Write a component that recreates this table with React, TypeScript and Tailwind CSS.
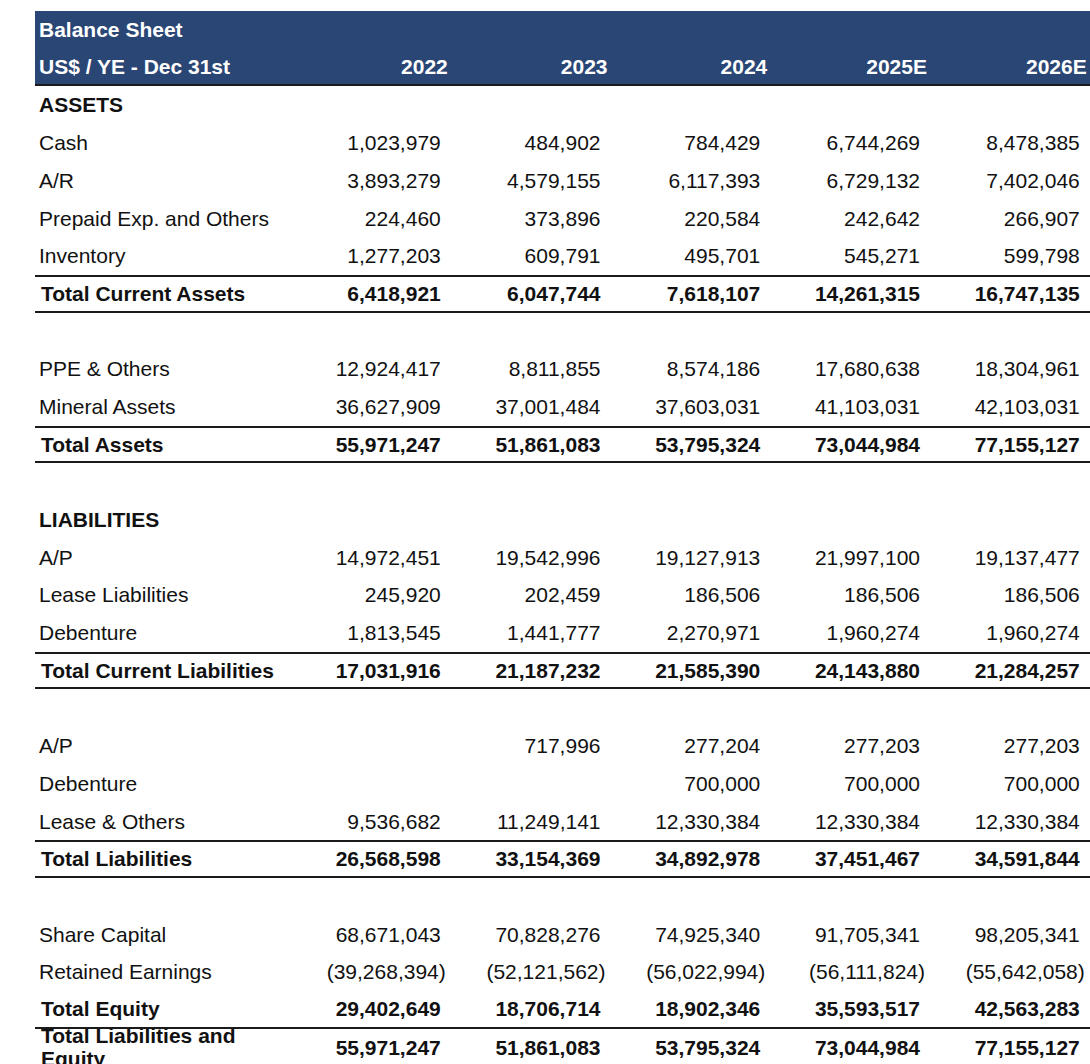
type Row = {
  label: string;
  values?: string[];
  kind?: "item" | "total" | "section" | "blank" | "final" | "equity";
};

const rows: Row[] = [
  { label: "ASSETS", kind: "section" },
  { label: "Cash", values: ["1,023,979", "484,902", "784,429", "6,744,269", "8,478,385"] },
  { label: "A/R", values: ["3,893,279", "4,579,155", "6,117,393", "6,729,132", "7,402,046"] },
  { label: "Prepaid Exp. and Others", values: ["224,460", "373,896", "220,584", "242,642", "266,907"] },
  { label: "Inventory", values: ["1,277,203", "609,791", "495,701", "545,271", "599,798"] },
  { label: "Total Current Assets", kind: "total", values: ["6,418,921", "6,047,744", "7,618,107", "14,261,315", "16,747,135"] },
  { label: "", kind: "blank" },
  { label: "PPE & Others", values: ["12,924,417", "8,811,855", "8,574,186", "17,680,638", "18,304,961"] },
  { label: "Mineral Assets", values: ["36,627,909", "37,001,484", "37,603,031", "41,103,031", "42,103,031"] },
  { label: "Total Assets", kind: "total", values: ["55,971,247", "51,861,083", "53,795,324", "73,044,984", "77,155,127"] },
  { label: "", kind: "blank" },
  { label: "LIABILITIES", kind: "section" },
  { label: "A/P", values: ["14,972,451", "19,542,996", "19,127,913", "21,997,100", "19,137,477"] },
  { label: "Lease Liabilities", values: ["245,920", "202,459", "186,506", "186,506", "186,506"] },
  { label: "Debenture", values: ["1,813,545", "1,441,777", "2,270,971", "1,960,274", "1,960,274"] },
  { label: "Total Current Liabilities", kind: "total", values: ["17,031,916", "21,187,232", "21,585,390", "24,143,880", "21,284,257"] },
  { label: "", kind: "blank" },
  { label: "A/P", values: ["", "717,996", "277,204", "277,203", "277,203"] },
  { label: "Debenture", values: ["", "", "700,000", "700,000", "700,000"] },
  { label: "Lease & Others", values: ["9,536,682", "11,249,141", "12,330,384", "12,330,384", "12,330,384"] },
  { label: "Total Liabilities", kind: "total", values: ["26,568,598", "33,154,369", "34,892,978", "37,451,467", "34,591,844"] },
  { label: "", kind: "blank" },
  { label: "Share Capital", values: ["68,671,043", "70,828,276", "74,925,340", "91,705,341", "98,205,341"] },
  { label: "Retained Earnings", values: ["(39,268,394)", "(52,121,562)", "(56,022,994)", "(56,111,824)", "(55,642,058)"] },
  { label: "Total Equity", kind: "equity", values: ["29,402,649", "18,706,714", "18,902,346", "35,593,517", "42,563,283"] },
  { label: "Total Liabilities and Equity", kind: "final", values: ["55,971,247", "51,861,083", "53,795,324", "73,044,984", "77,155,127"] },
];

const years = ["2022", "2023", "2024", "2025E", "2026E"];

function Num({ v }: { v: string }) {
  if (v.startsWith("(")) {
    return <span className="mr-[-5px]">{v}</span>;
  }
  return <span>{v}</span>;
}

export default function App() {
  return (
    <div
      className="w-[1090px] h-[1064px] overflow-hidden bg-white pt-[11px] pl-[35px] text-[21px] text-[#111]"
      style={{ fontFamily: '"Liberation Sans", Arial, sans-serif' }}
    >
      <div className="w-[1056px]">
        {/* header */}
        <div className="bg-[#2a4675] text-white font-bold">
          <div className="h-[37.7px] flex items-center pl-[4px]">Balance Sheet</div>
          <div className="h-[37.7px] grid grid-cols-[256px_repeat(5,159.75px)] grid-rows-[minmax(0,1fr)] items-center border-b-2 border-[#1a1a1a]">
            <div className="pl-[4px] whitespace-nowrap">US$ / YE - Dec 31st</div>
            {years.map((y) => (
              <div key={y} className="text-right pr-[3px]">
                {y}
              </div>
            ))}
          </div>
        </div>

        {rows.map((r, i) => {
          const isTotal = r.kind === "total" || r.kind === "equity" || r.kind === "final";
          const bold = isTotal || r.kind === "section";
          let borders = "";
          if (r.kind === "total") borders = "border-y-2 border-[#1a1a1a]";
          if (r.kind === "equity") borders = "border-b-2 border-[#1a1a1a]";
          return (
            <div
              key={i}
              className={`h-[37.7px] grid grid-cols-[256px_repeat(5,159.75px)] grid-rows-[minmax(0,1fr)] items-center overflow-hidden ${borders} ${bold ? "font-bold" : ""}`}
            >
              <div
                className={`${isTotal ? "pl-[6px]" : "pl-[4px]"} ${r.kind === "final" ? "leading-[23px]" : "whitespace-nowrap"}`}
              >
                {r.label}
              </div>
              {(r.values ?? ["", "", "", "", ""]).map((v, j) => (
                <div key={j} className="text-right pr-[10px] whitespace-nowrap">
                  <Num v={v} />
                </div>
              ))}
            </div>
          );
        })}
      </div>
    </div>
  );
}
